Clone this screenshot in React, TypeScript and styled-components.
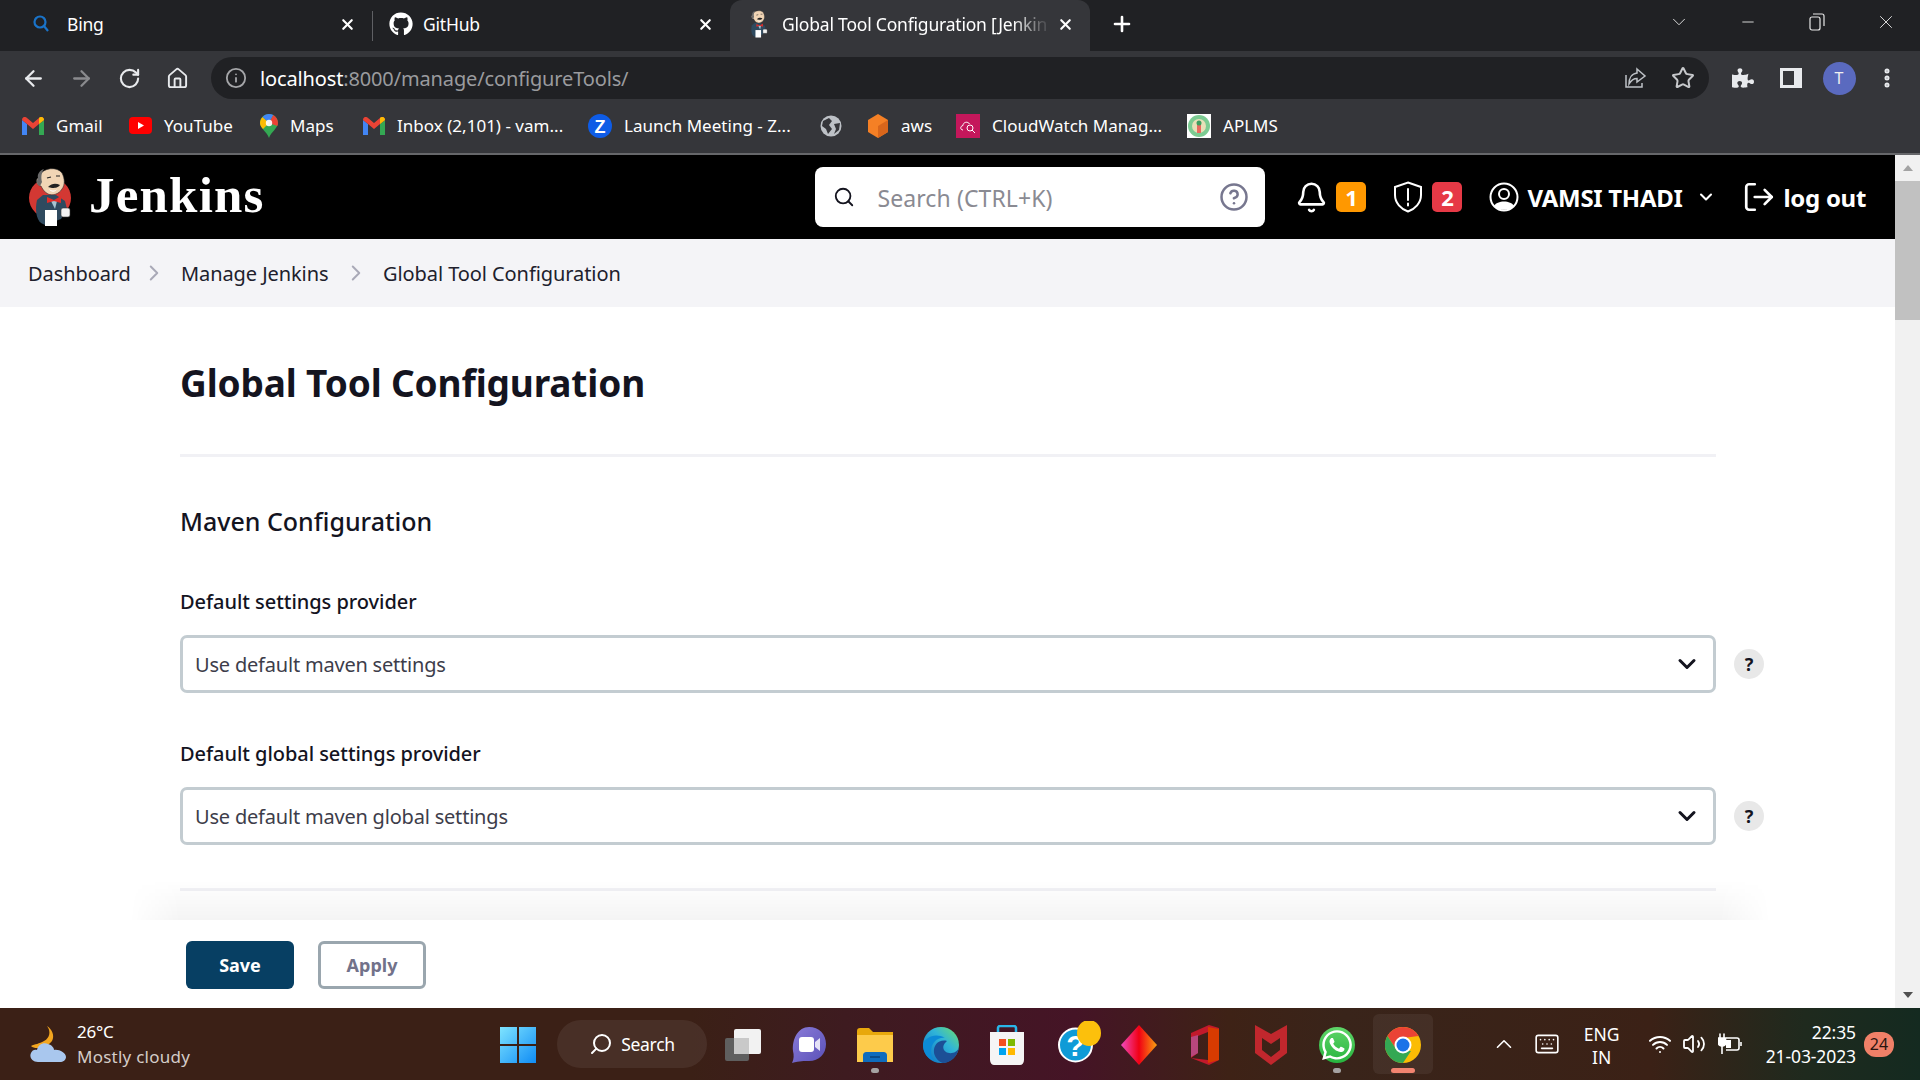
import styled, { createGlobalStyle } from "styled-components";
import {
  ArrowLeft,
  ArrowRight,
  Bell,
  ChevronDown,
  ChevronRight,
  ChevronUp,
  CircleHelp,
  Home,
  Info,
  Keyboard,
  LogOut,
  MoreVertical,
  RotateCw,
  Search,
  Star,
  Volume2,
  Wifi,
  X,
  Plus,
  Minus,
} from "lucide-react";
import { FaGithub, FaPuzzlePiece, FaWhatsapp } from "react-icons/fa";

const uiFont = `"Noto Sans", "Open Sans", sans-serif`;

const GlobalStyle = createGlobalStyle`
  html, body {
    margin: 0;
    padding: 0;
    height: 100%;
    overflow: hidden;
    background: #fff;
    font-family: ${uiFont};
  }
  * { box-sizing: border-box; }
`;

const Screen = styled.div`
  width: 1920px;
  height: 1080px;
  display: flex;
  flex-direction: column;
  overflow: hidden;
`;

/* browser chrome */
const TabStrip = styled.div`
  height: 51px;
  background: #202124;
  display: flex;
  color: #fff;
`;

const Tab = styled.div<{ $pad: number; $width: number; $active?: boolean }>`
  position: relative;
  width: ${(p) => p.$width}px;
  padding: 0 16px 3px ${(p) => p.$pad}px;
  display: flex;
  align-items: center;
  font-size: 17.5px;
  letter-spacing: -0.2px;
  background: ${(p) => (p.$active ? "#35363a" : "transparent")};
  border-radius: ${(p) => (p.$active ? "12px 12px 0 0" : "0")};
`;

const TabSplit = styled.div`
  width: 1px;
  height: 30px;
  margin-top: 11px;
  background: #5f6064;
`;

const TabIcon = styled.span`
  width: 34px;
  flex: none;
  display: flex;
  align-items: center;
`;

const TabTitle = styled.span<{ $fade?: boolean }>`
  flex: 1;
  white-space: nowrap;
  ${(p) =>
    p.$fade
      ? "mask-image: linear-gradient(90deg, #000 84%, rgba(0,0,0,0.15) 95%);"
      : ""}
`;

const NewTab = styled.div`
  width: 64px;
  padding: 0 0 3px 0;
  display: flex;
  align-items: center;
  justify-content: center;
`;

const WindowControls = styled.div`
  margin-left: auto;
  display: flex;
  padding-bottom: 7px;
`;

const WindowButton = styled.div`
  width: 69px;
  display: flex;
  align-items: center;
  justify-content: center;
  color: #e8e8e8;
`;

const Toolbar = styled.div`
  height: 49px;
  padding: 6px 9px 1px;
  background: #35363a;
  display: flex;
  align-items: center;
`;

const NavButton = styled.div<{ $dim?: boolean }>`
  width: 48px;
  flex: none;
  display: flex;
  justify-content: center;
  align-items: center;
  color: ${(p) => (p.$dim ? "#8a8b8e" : "#e8eaed")};
`;

const Omnibox = styled.div`
  flex: 1;
  height: 42px;
  margin: 0 10px;
  padding: 0 2px 0 14px;
  border-radius: 21px;
  background: #202124;
  display: flex;
  align-items: center;
`;

const OmniUrl = styled.div`
  flex: 1;
  margin-left: 13px;
  font-size: 20px;
  letter-spacing: -0.14px;
  color: #9a9b9e;
  span {
    color: #fff;
  }
`;

const Avatar = styled.div`
  width: 33px;
  height: 33px;
  border-radius: 50%;
  background: #5a6abf;
  color: #f0f0f0;
  font-size: 16px;
  display: flex;
  align-items: center;
  justify-content: center;
`;

const BookmarkBar = styled.div`
  height: 53px;
  padding: 0 0 2px 22px;
  background: #35363a;
  display: flex;
  align-items: center;
`;

const Bookmark = styled.div<{ $width: number }>`
  width: ${(p) => p.$width}px;
  flex: none;
  display: flex;
  align-items: center;
  gap: 12px;
  font-size: 17px;
  letter-spacing: 0.02px;
  color: #fff;
  white-space: nowrap;
`;

const ChromeEdge = styled.div`
  height: 2px;
  background: #66676a;
`;

/* jenkins page */
const Viewport = styled.div`
  flex: 1;
  min-height: 0;
  display: flex;
`;

const Page = styled.div`
  flex: 1;
  min-width: 0;
  display: flex;
  flex-direction: column;
  background: #fff;
  color: #14141f;
`;

const Scrollbar = styled.div`
  width: 25px;
  background: #f1f1f1;
  display: flex;
  flex-direction: column;
  align-items: center;
`;

const ScrollArrow = styled.div<{ $down?: boolean }>`
  height: 26px;
  width: 100%;
  margin-top: ${(p) => (p.$down ? "auto" : "0")};
  display: flex;
  align-items: center;
  justify-content: center;
  &::before {
    content: "";
    border-left: 5px solid transparent;
    border-right: 5px solid transparent;
    ${(p) => (p.$down ? "border-top: 6px solid #505050;" : "border-bottom: 6px solid #a3a3a3;")}
  }
`;

const ScrollThumb = styled.div`
  width: 100%;
  height: 139px;
  background: #c1c1c1;
`;

const Header = styled.header`
  height: 84px;
  background: #000;
  color: #fff;
  display: flex;
  align-items: center;
  padding: 0 29px 0 29px;
`;

const Brand = styled.div`
  display: flex;
  align-items: center;
  gap: 18px;
  font-family: "Liberation Serif", Georgia, serif;
  font-weight: 700;
  font-size: 51px;
  line-height: 60px;
  letter-spacing: 1.2px;
  span {
    margin-top: -4px;
  }
`;

const SearchBox = styled.div`
  width: 450px;
  height: 60px;
  margin-left: auto;
  padding: 0 16px 0 18px;
  background: #fff;
  border-radius: 8px;
  display: flex;
  align-items: center;
  color: #14141f;
`;

const SearchHint = styled.span`
  flex: 1;
  margin-left: 22px;
  padding-top: 2px;
  font-size: 23px;
  letter-spacing: 0.1px;
  color: #8a8a92;
`;

const HeaderAction = styled.div<{ $left: number }>`
  margin-left: ${(p) => p.$left}px;
  display: flex;
  align-items: center;
  font-weight: 700;
  font-size: 24px;
  letter-spacing: -0.3px;
  white-space: nowrap;
`;

const HeaderLabel = styled.span<{ $gap: number }>`
  margin-left: ${(p) => p.$gap}px;
`;

const CountBadge = styled.span<{ $bg: string; $gap: number }>`
  width: 30px;
  height: 30px;
  margin-left: ${(p) => p.$gap}px;
  border-radius: 5px;
  background: ${(p) => p.$bg};
  color: #fff;
  font-size: 22px;
  font-weight: 700;
  display: flex;
  align-items: center;
  justify-content: center;
`;

const Breadcrumbs = styled.nav`
  height: 68px;
  padding-left: 28px;
  background: #f4f4f7;
  display: flex;
  align-items: center;
  font-size: 20px;
  letter-spacing: -0.08px;
  color: #20202c;
`;

const Crumb = styled.span<{ $width: number }>`
  width: ${(p) => p.$width}px;
  white-space: nowrap;
`;

const CrumbSep = styled.span`
  width: 54px;
  display: flex;
  justify-content: center;
  color: #a9a9b7;
`;

const Main = styled.main`
  flex: 1;
  min-height: 0;
  width: 1536px;
  margin-left: 180px;
  overflow: visible;
`;

const Title = styled.h1`
  margin: 0;
  height: 150px;
  padding-top: 51px;
  font-size: 37px;
  line-height: 50px;
  font-weight: 700;
  letter-spacing: -0.15px;
  border-bottom: 3px solid #f1f1f5;
`;

const SectionTitle = styled.h2`
  margin: 0;
  padding-top: 47px;
  font-size: 25px;
  line-height: 34px;
  font-weight: 500;
  letter-spacing: 0;
`;

const Field = styled.div<{ $top: number }>`
  padding-top: ${(p) => p.$top}px;
`;

const Label = styled.div`
  font-size: 20px;
  line-height: 28px;
  font-weight: 500;
  letter-spacing: -0.05px;
  margin-bottom: 19px;
`;

const FieldRow = styled.div`
  display: grid;
  grid-template-columns: 1536px 30px;
  column-gap: 18px;
  align-items: center;
`;

const SelectBox = styled.div`
  height: 58px;
  padding: 0 12px 0 12px;
  border: 3px solid #c3ccd1;
  border-radius: 7px;
  background: #fff;
  display: flex;
  align-items: center;
  justify-content: space-between;
  font-size: 20px;
  letter-spacing: -0.2px;
  color: #3d3d4a;
`;

const HelpDot = styled.div`
  width: 30px;
  height: 30px;
  border-radius: 50%;
  background: #e8e8e8;
  font-size: 18px;
  font-weight: 700;
  display: flex;
  align-items: center;
  justify-content: center;
`;

const Divider = styled.div`
  height: 3px;
  margin-top: 43px;
  background: #f1f1f5;
`;

const Sticker = styled.footer`
  position: relative;
  height: 88px;
  padding: 21px 0 0 186px;
  background: #fff;
  display: flex;
  gap: 24px;
  align-items: flex-start;
  &::before {
    content: "";
    position: absolute;
    left: 130px;
    width: 1640px;
    top: -40px;
    height: 40px;
    background: linear-gradient(180deg, rgba(0, 0, 0, 0), rgba(0, 0, 0, 0.045));
    mask-image: linear-gradient(90deg, transparent 0, #000 50px, #000 1590px, transparent 100%);
  }
`;

const Button = styled.div<{ $primary?: boolean }>`
  width: 108px;
  height: 48px;
  border-radius: 6px;
  font-size: 18px;
  font-weight: 700;
  display: flex;
  align-items: center;
  justify-content: center;
  background: ${(p) => (p.$primary ? "#073f63" : "#fff")};
  color: ${(p) => (p.$primary ? "#fff" : "#72728a")};
  border: ${(p) => (p.$primary ? "none" : "3px solid #9aa6ae")};
`;

/* windows taskbar */
const Taskbar = styled.div`
  height: 72px;
  background: linear-gradient(
    90deg,
    #3b2016 0%,
    #3b2016 36%,
    #3e1b20 44%,
    #451426 56%,
    #3e2216 64%,
    #39241a 70%,
    #3b2116 86%,
    #1f2a1e 94%,
    #142a20 100%
  );
  display: grid;
  grid-template-columns: 485px auto 1fr auto;
  align-items: center;
  color: #fff;
`;

const Weather = styled.div`
  padding-left: 30px;
  display: flex;
  align-items: center;
  gap: 11px;
`;

const WeatherText = styled.div`
  font-size: 17px;
  line-height: 25px;
  letter-spacing: -0.2px;
  small {
    display: block;
    font-size: 17px;
    letter-spacing: 0.25px;
    color: #d4ccc8;
  }
`;

const TaskList = styled.div`
  display: flex;
  align-items: center;
`;

const TaskIcon = styled.div<{ $active?: boolean; $dot?: boolean }>`
  position: relative;
  width: ${(p) => (p.$active ? "60px" : "66px")};
  height: 60px;
  margin: ${(p) => (p.$active ? "0 3px" : "0")};
  padding-top: 2px;
  display: flex;
  align-items: center;
  justify-content: center;
  border-radius: 6px;
  background: ${(p) => (p.$active ? "rgba(255,255,255,0.06)" : "transparent")};
  &::after {
    content: "";
    display: ${(p) => (p.$active || p.$dot ? "block" : "none")};
    position: absolute;
    bottom: 1px;
    left: 50%;
    transform: translateX(-50%);
    width: ${(p) => (p.$active ? "24px" : "8px")};
    height: 5px;
    border-radius: 3px;
    background: ${(p) => (p.$active ? "#f28470" : "#a5a2a2")};
  }
`;

const SearchPill = styled.div`
  width: 150px;
  height: 48px;
  margin-left: 6px;
  margin-right: 3px;
  border-radius: 24px;
  background: rgba(255, 255, 255, 0.07);
  display: flex;
  align-items: center;
  justify-content: center;
  gap: 8px;
  font-size: 17.5px;
  letter-spacing: -0.3px;
`;

const PillGlass = styled(Search)`
  transform: scaleX(-1);
`;

const Tray = styled.div`
  grid-column: 4;
  display: flex;
  align-items: center;
  padding-right: 26px;
`;

const TrayIcon = styled.div<{ $left: number }>`
  margin-left: ${(p) => p.$left}px;
  display: flex;
  align-items: center;
  color: #fff;
`;

const Lang = styled.div`
  width: 44px;
  margin-left: 20px;
  padding-top: 3px;
  text-align: center;
  font-size: 17.5px;
  line-height: 23px;
`;

const Clock = styled.div`
  margin-left: 24px;
  text-align: right;
  font-size: 17.5px;
  line-height: 24px;
  letter-spacing: -0.1px;
`;

const NotifyBadge = styled.div`
  position: absolute;
  right: 0;
  width: 30px;
  height: 25px;
  border-radius: 12px;
  background: #f08068;
  color: #2a1410;
  font-size: 16px;
  display: flex;
  align-items: center;
  justify-content: center;
`;

const TrayWrap = styled.div`
  position: relative;
  display: flex;
  align-items: center;
  padding-right: 38px;
`;

/* drawings */
const JenkinsLogo = ({ size, ring = true }: { size: number; ring?: boolean }) => (
  <svg width={size * 0.7} height={size} viewBox="0 0 42 60">
    {ring && <ellipse cx="21" cy="31" rx="21" ry="20" fill="#d33833" />}
    <path d="M8 33 C6 42 7 52 12 56 L16 58 L32 52 L38 42 L36 34 L27 28 L14 28Z" fill="#2f4a5f" />
    <path
      d="M11 8 C14 1 28 -1 33 6 C36 12 36 18 33 22 C30 27 24 29 19 27 C15 25 13 21 12 19 C8 19 6 13 9 11 Z"
      fill="#f1d5b5"
      stroke="#2b2b2b"
      strokeWidth="0.6"
    />
    <path d="M9 11 C8 7 11 3 15 2 C12 6 12 11 13 15 L11 19 C8 18 7 14 9 11Z" fill="#6a6a6a" />
    <path d="M18 11 L22 10 M27 9 L31 9" stroke="#222" strokeWidth="1.2" />
    <path d="M19 20 C23 16 27 16 31 18 C29 21 25 21 23 21 Z" fill="#222" />
    <path d="M20 22 C23 24 26 24 28 22 C27 25 22 26 20 22Z" fill="#fff" />
    <path d="M22 34 L28 34 L26 42 Z" fill="#a7c4d2" />
    <path d="M18 30 L25 33 L32 29 L32 36 L25 34 L18 36Z" fill="#e02e2a" />
    <rect x="16" y="43" width="12" height="16" fill="#fff" />
    <rect x="32" y="41" width="9" height="9" rx="2" fill="#f2f2f2" stroke="#333" strokeWidth="0.6" />
  </svg>
);

const GmailIcon = () => (
  <svg width="22" height="18" viewBox="0 0 22 18">
    <path d="M0 3 L0 18 L5 18 L5 7 Z" fill="#4285f4" />
    <path d="M22 3 L22 18 L17 18 L17 7 Z" fill="#34a853" />
    <path d="M0 3 C0 0 3 -1 5 1 L11 6 L17 1 C19 -1 22 0 22 3 L17 7 L11 12 L5 7 Z" fill="#ea4335" />
    <path d="M17 1 C19 -1 22 0 22 3 L17 7 Z" fill="#fbbc04" />
  </svg>
);

const YoutubeIcon = () => (
  <svg width="23" height="17" viewBox="0 0 23 17">
    <rect width="23" height="17" rx="4" fill="#f00" />
    <path d="M9 5 L15 8.5 L9 12 Z" fill="#fff" />
  </svg>
);

const MapsIcon = () => (
  <svg width="18" height="24" viewBox="0 0 18 24">
    <path d="M9 24 C7 18 0 14 0 9 C0 4 4 0 9 0 C14 0 18 4 18 9 C18 14 11 18 9 24Z" fill="#34a853" />
    <path d="M2.6 3 L9 9 L3 15 C1 13 0 11 0 9 C0 6.800 1 4.600 2.600 3Z" fill="#fbbc04" />
    <path d="M2.600 3 C4 1 6.500 0 9 0 C10.500 0 12 .4 13.300 1.100 L9 9 Z" fill="#4285f4" />
    <path d="M13.300 1.100 C16 2.700 18 5.500 18 9 C18 10 17.700 11 17.300 12 L9 9 Z" fill="#ea4335" />
    <circle cx="9" cy="9" r="3.200" fill="#fff" opacity="0.9" />
  </svg>
);

const ZoomIcon = () => (
  <svg width="24" height="24" viewBox="0 0 24 24">
    <circle cx="12" cy="12" r="12" fill="#0e5ce6" />
    <text x="12" y="18.500" textAnchor="middle" fontFamily="Liberation Sans" fontWeight="700" fontSize="18" fill="#fff">Z</text>
  </svg>
);

const GlobeIcon = () => (
  <svg width="22" height="22" viewBox="0 0 22 22">
    <circle cx="11" cy="11" r="10.500" fill="#bdc1c6" />
    <path d="M3 6 L9 3 L12 6 L9 10 L12 14 L8 19 L6 14 L2 11Z M14 9 L20 8 L19 15 L14 19 L16 14Z" fill="#35363a" />
  </svg>
);

const AwsIcon = () => (
  <svg width="22" height="24" viewBox="0 0 22 24">
    <path d="M11 0 L21 6 L21 18 L11 24 L1 18 L1 6 Z" fill="#f58025" />
    <path d="M11 12 L21 6 L21 18 L11 24 Z" fill="#d9661b" />
  </svg>
);

const CloudWatchIcon = () => (
  <svg width="24" height="24" viewBox="0 0 24 24">
    <rect width="24" height="24" fill="#c4175b" />
    <path d="M7 16 C4 16 4 12 7 11.500 C7 8 12 7 13.500 10" fill="none" stroke="#fff" strokeWidth="1" />
    <circle cx="14" cy="14" r="3" fill="none" stroke="#fff" strokeWidth="1" />
    <path d="M16 16 L19 19" stroke="#fff" strokeWidth="1" />
  </svg>
);

const AplmsIcon = () => (
  <svg width="24" height="24" viewBox="0 0 24 24">
    <rect width="24" height="24" fill="#fff" />
    <circle cx="12" cy="12" r="11" fill="#7ccb92" />
    <circle cx="12" cy="12" r="7" fill="#e8e0b8" />
    <rect x="10" y="10" width="4" height="9" fill="#e96a5f" />
    <circle cx="12" cy="9" r="2.500" fill="#3c9d5f" />
  </svg>
);

const ShareIcon = () => (
  <svg width="24" height="24" viewBox="0 0 24 24" fill="none" stroke="#bdc1c6" strokeWidth="1.500">
    <path d="M3 9 V21 H19 V17" />
    <path d="M14 3 L22 10 L14 16 V12.500 C10 12.500 8 14.500 6 18 C6 12 9 7.500 14 7 Z" />
  </svg>
);

const SidePanelIcon = () => (
  <svg width="22" height="20" viewBox="0 0 22 20">
    <path d="M0 0 H22 V20 H0 Z M3 3 V17 H14 V3 Z" fill="#e8eaed" fillRule="evenodd" />
  </svg>
);

const ShieldIcon = () => (
  <svg width="30" height="32" viewBox="0 0 30 32" fill="none" stroke="#fff" strokeWidth="2">
    <path d="M15 1.500 L28 6 V14 C28 22 22 28 15 30.500 C8 28 2 22 2 14 V6 Z" />
    <path d="M15 8 V19 M15 22.500 V24.500" strokeLinecap="round" />
  </svg>
);

const UserIcon = () => (
  <svg width="30" height="30" viewBox="0 0 30 30">
    <circle cx="15" cy="15" r="13.500" fill="none" stroke="#fff" strokeWidth="2" />
    <circle cx="15" cy="12" r="5" fill="none" stroke="#fff" strokeWidth="2" />
    <path d="M5 24 C8 18 22 18 25 24 C22 29 8 29 5 24Z" fill="#fff" />
  </svg>
);

const BingGlass = () => (
  <svg width="16" height="18" viewBox="0 0 16 18" fill="none" stroke="#1a73c8" strokeWidth="2.200">
    <circle cx="7" cy="7" r="5.500" />
    <path d="M11 11 L15 16" />
  </svg>
);

const WeatherIcon = () => (
  <svg width="36" height="36" viewBox="0 0 36 36">
    <path d="M17 0 C21 5 20 12 14 15 C9 18 5 18 1 20 C5 24 17 22 22 15 C25 10 22 3 17 0Z" fill="#f2a51f" />
    <path d="M8 36 C2 36 -1 31 1 27 C2 24 5 23 7 24 C8 19 13 16 18 18 C22 19 24 22 24 24 C29 23 36 27 36 31 C36 34 33 36 30 36 Z" fill="#a9c7ee" />
  </svg>
);

const WinLogo = () => (
  <svg width="36" height="36" viewBox="0 0 36 36">
    <defs>
      <linearGradient id="win" x1="0" y1="0" x2="1" y2="1">
        <stop offset="0" stopColor="#7fe4ff" />
        <stop offset="1" stopColor="#0f8cf5" />
      </linearGradient>
    </defs>
    <path d="M0 0 H17 V17 H0 Z M19 0 H36 V17 H19 Z M0 19 H17 V36 H0 Z M19 19 H36 V36 H19 Z" fill="url(#win)" />
  </svg>
);

const TaskViewIcon = () => (
  <svg width="36" height="32" viewBox="0 0 36 32">
    <rect x="0" y="9" width="24" height="23" rx="2" fill="#5f5f5f" />
    <rect x="9" y="0" width="27" height="25" rx="2" fill="#f2f2f2" />
    <rect x="9" y="9" width="15" height="16" fill="#c9c9c9" />
  </svg>
);

const TeamsIcon = () => (
  <svg width="34" height="36" viewBox="0 0 34 36">
    <defs>
      <linearGradient id="teams" x1="0" y1="0" x2="1" y2="1">
        <stop offset="0" stopColor="#8a7bd8" />
        <stop offset="1" stopColor="#5a51b8" />
      </linearGradient>
    </defs>
    <path d="M17 0 C27 0 34 7 34 17 C34 27 27 34 17 34 C12 34 8 34 0 36 C2 32 2 28 1 24 C0 12 6 0 17 0Z" fill="url(#teams)" />
    <rect x="7" y="10" width="15" height="15" rx="3" fill="#fff" />
    <path d="M23 15 L28 11 V24 L23 20 Z" fill="#e5e2f7" />
  </svg>
);

const FolderIcon = () => (
  <svg width="36" height="34" viewBox="0 0 36 34">
    <path d="M0 3 C0 1 1 0 3 0 H12 L16 4 H36 V34 H0 Z" fill="#e8a80c" />
    <path d="M0 7 H36 V34 H0 Z" fill="#fdcb4b" />
    <path d="M6 34 V27 C6 25 8 24 9 24 H27 C28 24 30 25 30 27 V34 Z" fill="#0f6cbd" />
    <rect x="13" y="28" width="10" height="2" fill="#0a4c8a" />
  </svg>
);

const EdgeIcon = () => (
  <svg width="36" height="36" viewBox="0 0 36 36">
    <defs>
      <linearGradient id="edge" x1="0" y1="1" x2="1" y2="0">
        <stop offset="0" stopColor="#0a6fc2" />
        <stop offset="0.6" stopColor="#30b4d8" />
        <stop offset="1" stopColor="#6fe06a" />
      </linearGradient>
    </defs>
    <circle cx="18" cy="18" r="18" fill="url(#edge)" />
    <path d="M36 20 C34 27 26 27 23 25 C17 20 23 15 24 14 C16 12 10 18 11 26 C12 31 16 35 20 36 C28 36 35 29 36 20Z" fill="#1c4f96" />
    <path d="M0 17 C2 11 12 5 22 11 C15 10 8 15 8 25 C8 29 9 32 11 34 C5 32 0 26 0 17Z" fill="#0c8ad6" />
  </svg>
);

const StoreIcon = () => (
  <svg width="36" height="40" viewBox="0 0 36 40">
    <path d="M9 9 V3 C9 2 10 1 11 1 H25 C26 1 27 2 27 3 V9" fill="none" stroke="#29b6e8" strokeWidth="2.500" />
    <path d="M1 7 H35 V35 C35 38 33 40 31 40 H5 C3 40 1 38 1 35 Z" fill="#f5f5f5" />
    <rect x="10" y="14" width="7" height="7" fill="#f25022" />
    <rect x="19" y="14" width="7" height="7" fill="#7fba00" />
    <rect x="10" y="23" width="7" height="7" fill="#00a4ef" />
    <rect x="19" y="23" width="7" height="7" fill="#ffb900" />
  </svg>
);

const HelpAppIcon = () => (
  <svg width="66" height="48" viewBox="0 0 66 48">
    <circle cx="35.500" cy="24" r="16.500" fill="#0f9bd7" stroke="#fff" strokeWidth="2" />
    <text x="35.500" y="35" textAnchor="middle" fontFamily="Liberation Sans" fontWeight="700" fontSize="30" fill="#fff">?</text>
    <ellipse cx="49" cy="12" rx="12" ry="13" fill="#fcc00c" />
  </svg>
);

const DiamondIcon = () => (
  <svg width="36" height="40" viewBox="0 0 36 40">
    <defs>
      <linearGradient id="diamond" x1="0" y1="0" x2="1" y2="0">
        <stop offset="0" stopColor="#f04bc0" />
        <stop offset="0.5" stopColor="#f00014" />
        <stop offset="1" stopColor="#f9a010" />
      </linearGradient>
    </defs>
    <path d="M18 0 L36 20 L18 40 L0 20 Z" fill="url(#diamond)" />
  </svg>
);

const OfficeIcon = () => (
  <svg width="28" height="40" viewBox="0 0 28 40">
    <path d="M0 8 L18 0 L28 3 V35 L18 40 L0 33 L17 35 V7 L7 11 V28 L0 33 Z" fill="#c2192b" />
    <path d="M17 2 L28 4 V35 L17 38 Z" fill="#d83b01" />
    <path d="M0 12 L7 10 V28 L0 32Z" fill="#b8477c" />
  </svg>
);

const McafeeIcon = () => (
  <svg width="32" height="40" viewBox="0 0 32 40">
    <path d="M0 0 L16 9 L32 0 V28 L16 40 L0 28 Z M7 13 V25 L16 32 L25 25 V13 L16 19 Z" fill="#c1272d" fillRule="evenodd" />
  </svg>
);

const WhatsappWrap = styled.span`
  width: 36px;
  height: 36px;
  border-radius: 50%;
  background: linear-gradient(180deg, #5fd568, #27b43e);
  display: flex;
  align-items: center;
  justify-content: center;
  color: #fff;
`;

const ChromeIcon = () => (
  <svg width="36" height="38" viewBox="-18 -18 36 36">
    <circle r="18" fill="#fbbc04" />
    <path d="M0 -18 A18 18 0 0 0 -15.590 -9 L-7 4 L0 -7 L15.590 -9 A18 18 0 0 0 0 -18Z" fill="#ea4335" />
    <path d="M-15.590 -9 A18 18 0 0 0 0 18 L8 6 L-7 4 Z" fill="#34a853" />
    <circle r="8.500" fill="#fff" />
    <circle r="6.500" fill="#1a73e8" />
  </svg>
);

const BatteryIcon = () => (
  <svg width="24" height="22" viewBox="0 0 24 22" fill="none" stroke="#fff" strokeWidth="1.600">
    <path d="M8 5 H19 C20 5 21 6 21 7 V15 C21 16 20 17 19 17 H8" />
    <path d="M23 9 V13" />
    <path d="M2 1 V5 M6 1 V5" strokeLinecap="round" />
    <path d="M0.500 5 H7.500 V10 C7.500 12 6 13 4 13 C2 13 0.500 12 0.500 10Z" fill="#fff" />
    <path d="M4 13 V21" />
    <rect x="8" y="7" width="5" height="8" fill="#fff" stroke="none" />
  </svg>
);

const bookmarks = [
  { label: "Gmail", icon: <GmailIcon />, width: 107 },
  { label: "YouTube", icon: <YoutubeIcon />, width: 131 },
  { label: "Maps", icon: <MapsIcon />, width: 103 },
  { label: "Inbox (2,101) - vam...", icon: <GmailIcon />, width: 225 },
  { label: "Launch Meeting - Z...", icon: <ZoomIcon />, width: 232 },
  { label: "", icon: <GlobeIcon />, width: 47 },
  { label: "aws", icon: <AwsIcon />, width: 89 },
  { label: "CloudWatch Manag...", icon: <CloudWatchIcon />, width: 231 },
  { label: "APLMS", icon: <AplmsIcon />, width: 100 },
];

const apps = [
  { key: "teams", icon: <TeamsIcon /> },
  { key: "folder", icon: <FolderIcon />, dot: true },
  { key: "edge", icon: <EdgeIcon /> },
  { key: "store", icon: <StoreIcon /> },
  { key: "help", icon: <HelpAppIcon /> },
  { key: "diamond", icon: <DiamondIcon /> },
  { key: "office", icon: <OfficeIcon /> },
  { key: "mcafee", icon: <McafeeIcon /> },
  {
    key: "whatsapp",
    icon: (
      <WhatsappWrap>
        <FaWhatsapp size={34} />
      </WhatsappWrap>
    ),
    dot: true,
  },
];

const fields = [
  { label: "Default settings provider", value: "Use default maven settings", top: 50 },
  { label: "Default global settings provider", value: "Use default maven global settings", top: 47 },
];

export default function App() {
  return (
    <Screen>
      <GlobalStyle />
      <TabStrip>
        <Tab $pad={33} $width={372}>
          <TabIcon>
            <BingGlass />
          </TabIcon>
          <TabTitle>Bing</TabTitle>
          <X size={17} strokeWidth={3} />
        </Tab>
        <TabSplit />
        <Tab $pad={16} $width={357}>
          <TabIcon>
            <FaGithub size={24} />
          </TabIcon>
          <TabTitle>GitHub</TabTitle>
          <X size={17} strokeWidth={3} />
        </Tab>
        <Tab $pad={18} $width={360} $active>
          <TabIcon>
            <JenkinsLogo size={28} ring={false} />
          </TabIcon>
          <TabTitle $fade>Global Tool Configuration [Jenkin</TabTitle>
          <X size={17} strokeWidth={3} />
        </Tab>
        <NewTab>
          <Plus size={24} strokeWidth={2.6} />
        </NewTab>
        <WindowControls>
          <WindowButton>
            <ChevronDown size={22} strokeWidth={1} />
          </WindowButton>
          <WindowButton>
            <Minus size={18} strokeWidth={1.2} />
          </WindowButton>
          <WindowButton>
            <svg width="16" height="18" viewBox="0 0 16 18" fill="none" stroke="#e8e8e8" strokeWidth="1.200">
              <rect x="1" y="4" width="10" height="13" rx="2" />
              <path d="M4 1 H13 C14 1 15 2 15 3 V13" />
            </svg>
          </WindowButton>
          <WindowButton>
            <X size={22} strokeWidth={1} />
          </WindowButton>
        </WindowControls>
      </TabStrip>

      <Toolbar>
        <NavButton>
          <ArrowLeft size={25} strokeWidth={2.2} />
        </NavButton>
        <NavButton $dim>
          <ArrowRight size={25} strokeWidth={2.2} />
        </NavButton>
        <NavButton>
          <RotateCw size={23} strokeWidth={2.2} />
        </NavButton>
        <NavButton>
          <Home size={23} strokeWidth={2} />
        </NavButton>
        <Omnibox>
          <Info size={22} color="#a5a6a9" strokeWidth={2} />
          <OmniUrl>
            <span>localhost</span>:8000/manage/configureTools/
          </OmniUrl>
          <NavButton>
            <ShareIcon />
          </NavButton>
          <NavButton>
            <Star size={24} color="#c6c8cb" strokeWidth={2} />
          </NavButton>
        </Omnibox>
        <NavButton>
          <FaPuzzlePiece size={22} />
        </NavButton>
        <NavButton>
          <SidePanelIcon />
        </NavButton>
        <NavButton>
          <Avatar>T</Avatar>
        </NavButton>
        <NavButton>
          <MoreVertical size={24} strokeWidth={3} />
        </NavButton>
      </Toolbar>

      <BookmarkBar>
        {bookmarks.map((b, i) => (
          <Bookmark key={i} $width={b.width}>
            {b.icon}
            {b.label && <span>{b.label}</span>}
          </Bookmark>
        ))}
      </BookmarkBar>
      <ChromeEdge />

      <Viewport>
        <Page>
          <Header>
            <Brand>
              <JenkinsLogo size={60} />
              <span>Jenkins</span>
            </Brand>
            <SearchBox>
              <Search size={22} strokeWidth={2} />
              <SearchHint>Search (CTRL+K)</SearchHint>
              <CircleHelp size={30} color="#77778f" strokeWidth={2} />
            </SearchBox>
            <HeaderAction $left={30}>
              <Bell size={33} strokeWidth={1.9} />
              <CountBadge $bg="#ff9800" $gap={8}>1</CountBadge>
            </HeaderAction>
            <HeaderAction $left={27}>
              <ShieldIcon />
              <CountBadge $bg="#e63946" $gap={9}>2</CountBadge>
            </HeaderAction>
            <HeaderAction $left={27}>
              <UserIcon />
              <HeaderLabel $gap={8}>VAMSI THADI</HeaderLabel>
            </HeaderAction>
            <HeaderAction $left={13}>
              <ChevronDown size={20} strokeWidth={2.5} />
            </HeaderAction>
            <HeaderAction $left={26}>
              <LogOut size={34} strokeWidth={1.9} />
              <HeaderLabel $gap={8}>log out</HeaderLabel>
            </HeaderAction>
          </Header>

          <Breadcrumbs>
            <Crumb $width={99}>Dashboard</Crumb>
            <CrumbSep>
              <ChevronRight size={26} strokeWidth={1.8} />
            </CrumbSep>
            <Crumb $width={148}>Manage Jenkins</Crumb>
            <CrumbSep>
              <ChevronRight size={26} strokeWidth={1.8} />
            </CrumbSep>
            <Crumb $width={240}>Global Tool Configuration</Crumb>
          </Breadcrumbs>

          <Main>
            <Title>Global Tool Configuration</Title>
            <SectionTitle>Maven Configuration</SectionTitle>
            {fields.map((f) => (
              <Field key={f.label} $top={f.top}>
                <Label>{f.label}</Label>
                <FieldRow>
                  <SelectBox>
                    {f.value}
                    <ChevronDown size={28} strokeWidth={2.6} color="#14141f" />
                  </SelectBox>
                  <HelpDot>?</HelpDot>
                </FieldRow>
              </Field>
            ))}
            <Divider />
          </Main>

          <Sticker>
            <Button $primary>Save</Button>
            <Button>Apply</Button>
          </Sticker>
        </Page>
        <Scrollbar>
          <ScrollArrow />
          <ScrollThumb />
          <ScrollArrow $down />
        </Scrollbar>
      </Viewport>

      <Taskbar>
        <Weather>
          <WeatherIcon />
          <WeatherText>
            26°C
            <small>Mostly cloudy</small>
          </WeatherText>
        </Weather>
        <TaskList>
          <TaskIcon>
            <WinLogo />
          </TaskIcon>
          <SearchPill>
            <PillGlass size={24} strokeWidth={2} />
            Search
          </SearchPill>
          <TaskIcon>
            <TaskViewIcon />
          </TaskIcon>
          {apps.map((a) => (
            <TaskIcon key={a.key} $dot={a.dot}>
              {a.icon}
            </TaskIcon>
          ))}
          <TaskIcon $active>
            <ChromeIcon />
          </TaskIcon>
        </TaskList>
        <Tray>
          <TrayWrap>
            <TrayIcon $left={0}>
              <ChevronUp size={26} strokeWidth={1.5} />
            </TrayIcon>
            <TrayIcon $left={17}>
              <Keyboard size={26} strokeWidth={1.5} />
            </TrayIcon>
            <Lang>
              ENG
              <br />
              IN
            </Lang>
            <TrayIcon $left={24}>
              <Wifi size={24} strokeWidth={2} />
            </TrayIcon>
            <TrayIcon $left={10}>
              <Volume2 size={24} strokeWidth={1.8} />
            </TrayIcon>
            <TrayIcon $left={12}>
              <BatteryIcon />
            </TrayIcon>
            <Clock>
              22:35
              <br />
              21-03-2023
            </Clock>
            <NotifyBadge>24</NotifyBadge>
          </TrayWrap>
        </Tray>
      </Taskbar>
    </Screen>
  );
}
